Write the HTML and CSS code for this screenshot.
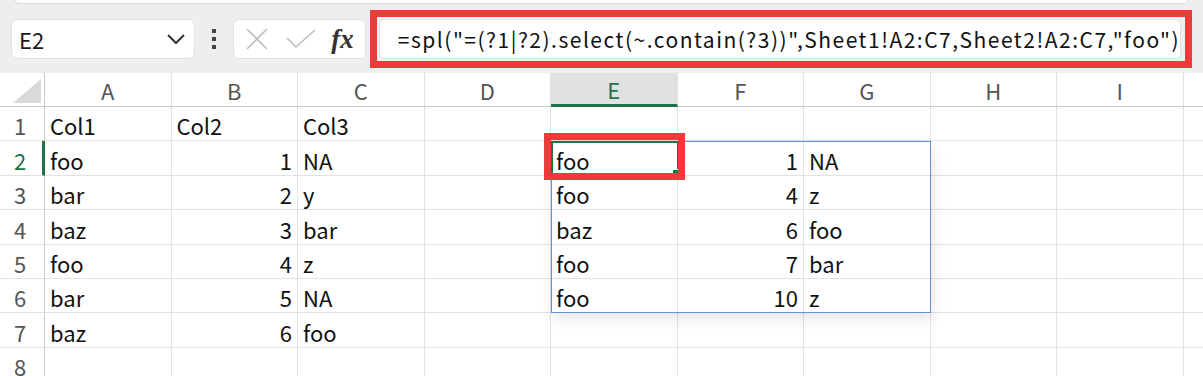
FILE: index.html
```html
<!DOCTYPE html>
<html lang="en">
<head>
    <meta charset="UTF-8">
    <meta name="viewport" content="width=device-width, initial-scale=1.0">
    <title>Sheet1</title>
    <link rel="stylesheet" href="styles.css">
</head>
<body>
    <div class="toolbar">
        <div class="ribbon-edge"></div>
        <div class="formula-row">
            <div class="name-box">
                <span>E2</span>
                <svg class="chevron" width="20" height="12" viewBox="0 0 20 12">
                    <path d="M2 2 L10 10 L18 2" fill="none" stroke="#333" stroke-width="2"/>
                </svg>
            </div>
            <div class="more-dots"><i></i><i></i><i></i></div>
            <div class="fx-buttons">
                <svg width="24" height="24" viewBox="0 0 24 24">
                    <path d="M2 2 L22 22 M22 2 L2 22" fill="none" stroke="#bdbdbd" stroke-width="1.6"/>
                </svg>
                <svg width="30" height="20" viewBox="0 0 30 20">
                    <path d="M1 9 L10 18 L29 1" fill="none" stroke="#bdbdbd" stroke-width="1.6"/>
                </svg>
                <span class="fx">fx</span>
            </div>
            <div class="formula-frame">
                <div class="formula-input">=spl("=(?1|?2).select(~.contain(?3))",Sheet1!A2:C7,Sheet2!A2:C7,"foo")</div>
            </div>
        </div>
    </div>

    <div class="sheet">
        <div id="grid" class="grid"></div>
        <div class="spill-range"></div>
        <div class="active-cell"><span class="fill-handle"></span></div>
        <div class="mark"></div>
    </div>

    <script>
        const grid = document.getElementById('grid');
        const columns = ['A', 'B', 'C', 'D', 'E', 'F', 'G', 'H', 'I', ''];

        const data = {
            1: {A: 'Col1', B: 'Col2', C: 'Col3'},
            2: {A: 'foo', B: 1, C: 'NA', E: 'foo', F: 1, G: 'NA'},
            3: {A: 'bar', B: 2, C: 'y', E: 'foo', F: 4, G: 'z'},
            4: {A: 'baz', B: 3, C: 'bar', E: 'baz', F: 6, G: 'foo'},
            5: {A: 'foo', B: 4, C: 'z', E: 'foo', F: 7, G: 'bar'},
            6: {A: 'bar', B: 5, C: 'NA', E: 'foo', F: 10, G: 'z'},
            7: {A: 'baz', B: 6, C: 'foo'},
            8: {}
        };

        function addCell(className, text) {
            const cell = document.createElement('div');
            cell.className = className;
            cell.textContent = text;
            grid.appendChild(cell);
        }

        addCell('corner', '');
        columns.forEach(col => {
            addCell(col === 'E' ? 'col-head selected' : 'col-head', col);
        });

        for (let row = 1; row <= 8; row++) {
            addCell(row === 2 ? 'row-head selected' : 'row-head', row);
            columns.forEach(col => {
                const value = data[row][col];
                if (value === undefined) {
                    addCell('cell', '');
                } else if (typeof value === 'number') {
                    addCell('cell number', value);
                } else {
                    addCell('cell', value);
                }
            });
        }
    </script>
</body>
</html>
```

FILE: styles.css
```css
body {
    margin: 0;
    width: 1203px;
    height: 376px;
    overflow: hidden;
    background-color: #ffffff;
    font-family: 'Noto Sans CJK SC', 'Noto Sans', sans-serif;
    color: #111;
}

.toolbar {
    height: 73px;
    background-color: #eeeeee;
    box-sizing: border-box;
}

.ribbon-edge {
    height: 3px;
    margin: 0 15px;
    background-color: #ffffff;
    border: 1px solid #dcdcdc;
    border-top: none;
    border-radius: 0 0 8px 8px;
}

.formula-row {
    display: flex;
    align-items: center;
    height: 40px;
    margin-top: 15px;
    padding: 0 11px 0 11px;
}

.name-box {
    display: flex;
    align-items: center;
    justify-content: space-between;
    width: 186px;
    height: 40px;
    box-sizing: border-box;
    padding: 0 8px 0 7px;
    background-color: #ffffff;
    border: 1px solid #e2e2e2;
    border-radius: 6px;
    font-size: 22px;
    color: #1a1a1a;
}

.more-dots {
    display: flex;
    flex-direction: column;
    gap: 4px;
    width: 39px;
    align-items: center;
}

.more-dots i {
    width: 4px;
    height: 4px;
    background-color: #444;
}

.fx-buttons {
    display: flex;
    align-items: center;
    width: 134px;
    height: 40px;
    box-sizing: border-box;
    padding: 0 8px 0 11px;
    gap: 17px;
    background-color: #ffffff;
    border: 1px solid #e2e2e2;
    border-radius: 6px;
}

.fx {
    font-family: 'Liberation Serif', serif;
    font-style: italic;
    font-weight: bold;
    font-size: 27px;
    color: #333;
    margin-left: -2px;
}

.formula-frame {
    flex: 1;
    margin-left: 4px;
    padding: 2px 4px 2px 2px;
    border: 7px solid #f03a3a;
}

.formula-input {
    height: 40px;
    box-sizing: border-box;
    padding-left: 18px;
    background-color: #ffffff;
    border: 1px solid #e2e2e2;
    border-radius: 5px;
    font-size: 21px;
    letter-spacing: 1.5px;
    line-height: 38px;
    white-space: nowrap;
    overflow: hidden;
    color: #111;
}

.sheet {
    position: relative;
}

.grid {
    display: grid;
    grid-template-columns: 45px repeat(10, 126.5px);
    grid-template-rows: 34px repeat(8, 34.4px);
}

.grid > div {
    box-sizing: border-box;
    border-right: 1px solid #e1e1e1;
    border-bottom: 1px solid #e1e1e1;
    font-size: 22px;
    white-space: nowrap;
    overflow: hidden;
}

.corner {
    position: relative;
    border-right-color: #c8c8c8 !important;
    border-bottom-color: #c8c8c8 !important;
}

.corner::after {
    content: '';
    position: absolute;
    right: 3px;
    bottom: 3px;
    width: 28px;
    height: 24px;
    background-color: #d9d9d9;
    clip-path: polygon(100% 0, 100% 100%, 0 100%);
}

.col-head {
    display: flex;
    justify-content: center;
    align-items: center;
    color: #555;
    border-bottom-color: #c8c8c8 !important;
}

.col-head.selected {
    background-color: #e1e1e1;
    color: #217346;
    border-bottom: 3px solid #217346 !important;
}

.row-head {
    display: flex;
    justify-content: center;
    align-items: flex-end;
    line-height: 30px;
    color: #555;
    border-right-color: #c8c8c8 !important;
    padding-right: 4px;
}

.row-head.selected {
    color: #217346;
    border-right: 3px solid #217346 !important;
    padding-right: 2px;
}

.cell {
    display: flex;
    align-items: flex-end;
    padding: 0 5px;
    line-height: 30px;
    color: #111;
}

.cell.number {
    justify-content: flex-end;
}

.spill-range {
    position: absolute;
    left: 551px;
    top: 68px;
    width: 380px;
    height: 172px;
    box-sizing: border-box;
    border: 1.5px solid #6a8ed6;
    box-shadow: 2px 6px 14px rgba(0, 0, 0, 0.10);
}

.active-cell {
    position: absolute;
    left: 551px;
    top: 68px;
    width: 128px;
    height: 35px;
    box-sizing: border-box;
    border: 2px solid #217346;
}

.fill-handle {
    position: absolute;
    right: -3px;
    bottom: -3px;
    width: 6px;
    height: 6px;
    background-color: #217346;
    border: 1px solid #ffffff;
}

.mark {
    position: absolute;
    left: 544px;
    top: 60px;
    width: 141px;
    height: 47px;
    box-sizing: border-box;
    border: 7px solid #f03a3a;
}
```
